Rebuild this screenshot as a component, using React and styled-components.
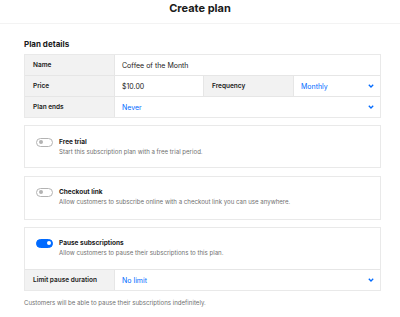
import React from "react";
import styled, { createGlobalStyle } from "styled-components";

const Global = createGlobalStyle`
  html, body { margin: 0; padding: 0; background: #fff; }
  body { font-family: Inter, "Noto Sans", sans-serif; color: #1a1a1a; -webkit-font-smoothing: antialiased; }
  * { box-sizing: border-box; }
`;

const Header = styled.header`
  height: 24px;
  border-bottom: 1px solid #f3f3f3;
  display: flex;
  justify-content: center;
  align-items: flex-start;
`;

const Title = styled.h1`
  margin: 0;
  padding-top: 1px;
  font-size: 11px;
  line-height: 15px;
  font-weight: 700;
  color: #1a1a1a;
`;

const Main = styled.main`
  padding: 0 19px 0 24px;
  display: flex;
  flex-direction: column;
`;

const SectionTitle = styled.h2`
  margin: 14px 0 4px;
  font-size: 8px;
  line-height: 12px;
  font-weight: 700;
`;

const Table = styled.div`
  border: 1px solid #e9e9e9;
  display: grid;
  grid-template-columns: 89px 89px 90px 1fr;
`;

const Label = styled.div`
  background: #f2f2f2;
  display: flex;
  align-items: center;
  padding-left: 8px;
  font-size: 6.5px;
  font-weight: 600;
  border-top: ${(p) => (p.$first ? "none" : "1px solid #e6e6e6")};
  border-left: ${(p) => (p.$divider ? "1px solid #e6e6e6" : "none")};
  height: ${(p) => (p.$first ? "20px" : "21px")};
`;

const Value = styled.div`
  grid-column: span ${(p) => p.$span || 1};
  height: ${(p) => (p.$first ? "20px" : "21px")};
  display: flex;
  align-items: center;
  justify-content: space-between;
  padding: 0 6px 0 7px;
  font-size: 7px;
  color: ${(p) => (p.$link ? "#006aff" : "#1a1a1a")};
  border-top: ${(p) => (p.$first ? "none" : "1px solid #e6e6e6")};
  border-left: 1px solid #e6e6e6;
`;

const Chevron = () => (
  <svg width="6" height="4" viewBox="0 0 6 4">
    <path d="M0.8 0.8 L3 3 L5.2 0.8" fill="none" stroke="#006aff" strokeWidth="1.3" />
  </svg>
);

const Card = styled.section`
  margin-top: ${(p) => p.$gap || 8}px;
  border: 1px solid #e9e9e9;
  display: flex;
  flex-direction: column;
`;

const ToggleRow = styled.div`
  display: flex;
  padding: ${(p) => p.$pad || "11px 11px 10px"};
  gap: 6px;
`;

const Switch = styled.div`
  width: 17px;
  height: 9px;
  border-radius: 5px;
  margin-top: 0.5px;
  flex-shrink: 0;
  position: relative;
  background: ${(p) => (p.$on ? "#006aff" : "#fff")};
  border: 1px solid ${(p) => (p.$on ? "#006aff" : "#b3b3b3")};
  &::after {
    content: "";
    position: absolute;
    top: 1.5px;
    left: ${(p) => (p.$on ? "9.5px" : "2px")};
    width: 4px;
    height: 4px;
    border-radius: 50%;
    background: ${(p) => (p.$on ? "#fff" : "#b3b3b3")};
  }
`;

const TextCol = styled.div`
  display: flex;
  flex-direction: column;
`;

const CardTitle = styled.div`
  font-size: 6.5px;
  line-height: 10px;
  font-weight: 700;
  color: #1a1a1a;
`;

const Desc = styled.div`
  font-size: 6.1px;
  line-height: 10px;
  color: #707070;
`;

const LimitRow = styled.div`
  display: grid;
  grid-template-columns: 89px 1fr;
  border-top: 1px solid #e6e6e6;
`;

const Footer = styled.p`
  margin: 7px 0 0;
  font-size: 6.1px;
  line-height: 10px;
  color: #707070;
`;

export default function App() {
  return (
    <>
      <Global />
      <Header>
        <Title>Create plan</Title>
      </Header>
      <Main>
        <SectionTitle>Plan details</SectionTitle>
        <Table>
          <Label $first>Name</Label>
          <Value $first $span={3}>Coffee of the Month</Value>
          <Label>Price</Label>
          <Value>$10.00</Value>
          <Label $divider>Frequency</Label>
          <Value $link>
            Monthly <Chevron />
          </Value>
          <Label>Plan ends</Label>
          <Value $link $span={3}>
            Never <Chevron />
          </Value>
        </Table>
        <Card $gap={7}>
          <ToggleRow>
            <Switch />
            <TextCol>
              <CardTitle>Free trial</CardTitle>
              <Desc>Start this subscription plan with a free trial period.</Desc>
            </TextCol>
          </ToggleRow>
        </Card>
        <Card>
          <ToggleRow $pad="10px 11px 12px">
            <Switch />
            <TextCol>
              <CardTitle>Checkout link</CardTitle>
              <Desc>Allow customers to subscribe online with a checkout link you can use anywhere.</Desc>
            </TextCol>
          </ToggleRow>
        </Card>
        <Card $gap={7}>
          <ToggleRow $pad="10px 11px 11px">
            <Switch $on />
            <TextCol>
              <CardTitle>Pause subscriptions</CardTitle>
              <Desc>Allow customers to pause their subscriptions to this plan.</Desc>
            </TextCol>
          </ToggleRow>
          <LimitRow>
            <Label $first>Limit pause duration</Label>
            <Value $first $link>
              No limit <Chevron />
            </Value>
          </LimitRow>
        </Card>
        <Footer>Customers will be able to pause their subscriptions indefinitely.</Footer>
      </Main>
    </>
  );
}
